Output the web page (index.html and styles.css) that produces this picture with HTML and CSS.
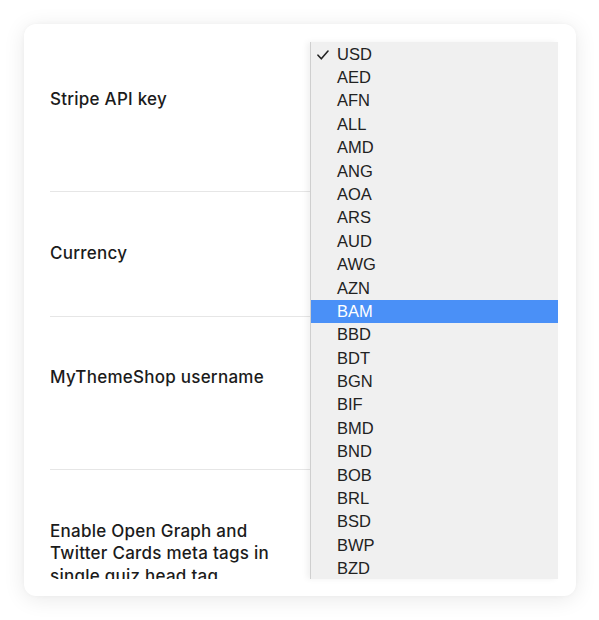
FILE: index.html
```html
<!DOCTYPE html>
<html>
<head>
<meta charset="utf-8">
<link rel="stylesheet" href="styles.css">
</head>
<body>
<div class="card">
  <div class="viewport">
    <div class="row row-1"><div class="label">Stripe API key</div></div>
    <div class="row row-2"><div class="label">Currency</div></div>
    <div class="row row-3"><div class="label">MyThemeShop username</div></div>
    <div class="row row-4"><div class="label">Enable Open Graph and Twitter Cards meta tags in single quiz head tag</div></div>
  </div>
  <ul class="menu">
    <li class="item checked"><svg class="check" width="12" height="10" viewBox="0 0 12 10"><polyline points="1,5.2 4.3,8.8 11,1" fill="none" stroke="#222" stroke-width="1.6" stroke-linecap="round" stroke-linejoin="round"/></svg>USD</li>
    <li class="item">AED</li>
    <li class="item">AFN</li>
    <li class="item">ALL</li>
    <li class="item">AMD</li>
    <li class="item">ANG</li>
    <li class="item">AOA</li>
    <li class="item">ARS</li>
    <li class="item">AUD</li>
    <li class="item">AWG</li>
    <li class="item">AZN</li>
    <li class="item active">BAM</li>
    <li class="item">BBD</li>
    <li class="item">BDT</li>
    <li class="item">BGN</li>
    <li class="item">BIF</li>
    <li class="item">BMD</li>
    <li class="item">BND</li>
    <li class="item">BOB</li>
    <li class="item">BRL</li>
    <li class="item">BSD</li>
    <li class="item">BWP</li>
    <li class="item">BZD</li>
  </ul>
</div>
</body>
</html>
```

FILE: styles.css
```css
* { box-sizing: border-box; }
html, body { margin: 0; padding: 0; background: #ffffff; }
body { padding: 24px 23px 24px 24px; }
.card {
  position: relative;
  width: 552px;
  height: 572px;
  background: #fff;
  border-radius: 12px;
  box-shadow: 0 3px 22px rgba(0,0,0,0.09), 0 0 4px rgba(0,0,0,0.03);
  padding: 16px 26px 17px 26px;
}
.viewport {
  height: 539px;
  overflow: hidden;
}
.row {
  border-bottom: 1px solid #e6e6e6;
}
.row-1 { height: 152px; padding-top: 48px; }
.row-2 { height: 125px; padding-top: 50px; }
.row-3 { height: 153px; padding-top: 49px; }
.row-4 { border-bottom: none; padding-top: 50px; }
.label {
  font-family: Inter, "Noto Sans", sans-serif;
  font-weight: 500;
  font-size: 17px;
  letter-spacing: 0.25px;
  line-height: 22.3px;
  color: #1b1b1b;
  width: 236px;
}
.menu {
  position: absolute;
  left: 286px;
  top: 18px;
  width: 248px;
  height: 537px;
  margin: 0;
  padding: 0.6px 0 0 0;
  list-style: none;
  background: #f0f0f0;
  border-left: 1px solid #cfcfcf;
  box-shadow: -3px 0 6px rgba(0,0,0,0.06);
  overflow: hidden;
}
.item {
  position: relative;
  height: 23.4px;
  line-height: 23.4px;
  padding-left: 26px;
  font-family: "Liberation Sans", Arial, sans-serif;
  font-size: 16.5px;
  color: #222;
}
.item.active {
  background: #4a90f7;
  color: #fff;
}
.check {
  position: absolute;
  left: 6px;
  top: 7px;
}
```
